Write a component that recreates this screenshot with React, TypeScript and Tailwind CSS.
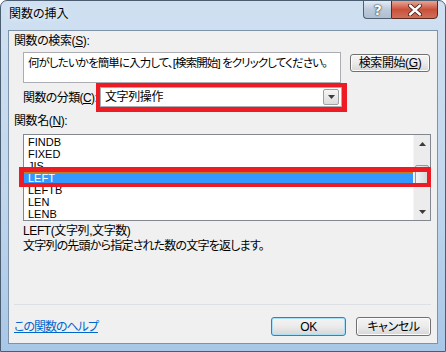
import React from 'react';

const names = ['FINDB', 'FIXED', 'JIS', 'LEFT', 'LEFTB', 'LEN', 'LENB'];

const Tri = ({ up }: { up?: boolean }) => (
  <svg width="7" height="4" viewBox="0 0 7 4">
    <path d={up ? 'M0 4 L3.5 0 L7 4 Z' : 'M0 0 L7 0 L3.5 4 Z'} fill="#3c3c3c" />
  </svg>
);

const WinButton = ({ label, def }: { label: string; def?: boolean }) => (
  <div
    className={`w-[75px] h-[19px] flex items-center justify-center rounded-[3px] border bg-gradient-to-b from-[#f4f4f4] via-[#ebebeb] to-[#d6d6d6] ${
      def ? 'border-[#3c7fb1] shadow-[inset_0_0_0_1px_#a9e0f8]' : 'border-[#707070] shadow-[inset_0_0_0_1px_#fcfcfc]'
    }`}
  >
    {label}
  </div>
);

export default function App() {
  return (
    <div className="w-[446px] h-[352px] flex flex-col rounded-t-[7px] border border-[#4b5d70] bg-gradient-to-b from-[#cfe0f1] via-[#c3d8ee] to-[#a8c7e7] font-['Liberation_Sans','Noto_Sans_CJK_JP',sans-serif] text-[12px] text-black overflow-hidden [font-feature-settings:'palt'] tracking-[-0.4px]">
      {/* title bar */}
      <div className="h-[29px] flex items-start pl-[8px]">
        <div className="mt-[5px] leading-[16px] tracking-normal [text-shadow:0_0_6px_#ffffff]">関数の挿入</div>
        <div className="ml-auto mr-[7px] flex h-[19px] -mt-px">
          <div className="w-[28px] h-[19px] flex items-center justify-center rounded-bl-[4px] border border-[#4f6072] border-r-0 bg-gradient-to-b from-[#e3ecf5] via-[#bccadb] to-[#aebfd2] text-white font-bold text-[14px] leading-none font-['DejaVu_Sans',sans-serif] [text-shadow:0_0_2px_#1d2a38,0_0_1px_#1d2a38]">
            ?
          </div>
          <div className="w-[47px] h-[19px] flex items-center justify-center rounded-br-[4px] border border-[#5a2a22] bg-gradient-to-b from-[#e8a595] via-[#c9503a] to-[#d0705a]">
            <svg width="16" height="12" viewBox="0 0 16 12">
              <path d="M3 1.5 L13 10.5 M13 1.5 L3 10.5" stroke="#3b1a14" strokeWidth="4" strokeLinecap="round" />
              <path d="M3 1.5 L13 10.5 M13 1.5 L3 10.5" stroke="#ffffff" strokeWidth="2.4" strokeLinecap="round" />
            </svg>
          </div>
        </div>
      </div>

      {/* client area */}
      <div className="mx-[7px] h-[314px] border border-[#7f93a8] bg-[#f0f0f0] flex flex-col">
        <div className="ml-[5px] mt-[3px] leading-[14px]">
          関数の検索(<span className="underline">S</span>):
        </div>

        <div className="mt-[4px] flex items-start">
          <div className="ml-[14px] w-[318px] h-[31px] border border-[#abadb3] bg-white pl-[4px] pt-[3px] leading-[14px] whitespace-nowrap overflow-hidden text-[11.5px] tracking-[-0.9px]">
            何がしたいかを簡単に入力して、[検索開始] をクリックしてください。
          </div>
          <div className="ml-[9px] mt-[2px] w-[80px] h-[18px] flex items-center justify-center rounded-[3px] border border-[#707070] bg-gradient-to-b from-[#f4f4f4] via-[#ebebeb] to-[#d6d6d6] shadow-[inset_0_0_0_1px_#fcfcfc]">
            検索開始(<span className="underline">G</span>)
          </div>
        </div>

        <div className="flex items-center">
          <div className="ml-[14px] w-[73px] whitespace-nowrap leading-[14px] tracking-[-0.6px]">
            関数の分類(<span className="underline">C</span>):
          </div>
          <div className="relative w-[251px] h-[29px] border-l-4 border-t-4 border-r-[5px] border-b-[5px] border-[#ed1c24]">
            <div className="w-full h-full border border-[#abadb3] bg-white flex items-center">
              <div className="pl-[4px] flex-1 leading-[14px]">文字列操作</div>
              <div className="mr-[2px] w-[16px] h-[16px] flex items-center justify-center rounded-[2px] border border-[#a0a0a0] bg-gradient-to-b from-[#f6f6f6] to-[#dcdcdc]">
                <Tri />
              </div>
            </div>
          </div>
        </div>

        <div className="ml-[5px] mt-[2px] leading-[14px]">
          関数名(<span className="underline">N</span>):
        </div>

        <div className="relative ml-[14px] mt-[6px] w-[408px] h-[87px] border border-[#828790] bg-white flex">
          <div className="flex-1 pt-px text-[11px] tracking-normal">
            {names.map((n) => (
              <div
                key={n}
                className={`h-[12px] leading-[12px] pl-[4px] ${
                  n === 'LEFT' ? 'bg-[#3399ff] text-white outline outline-1 outline-dotted outline-[#c47a1f] -outline-offset-1' : ''
                }`}
              >
                {n}
              </div>
            ))}
          </div>
          <div className="w-[17px] bg-[#ececec] border-l border-[#f4f4f4] flex flex-col">
            <div className="h-[17px] flex items-center justify-center">
              <Tri up />
            </div>
            <div className="flex-1">
              <div className="mt-[13px] mx-px h-[21px] rounded-[2px] border border-[#999999] bg-gradient-to-r from-[#f3f3f3] to-[#d8d8d8]" />
            </div>
            <div className="h-[17px] flex items-center justify-center">
              <Tri />
            </div>
          </div>
          <div className="absolute left-[-5px] top-[32px] w-[412px] h-[20px] border-l-[5px] border-t-[5px] border-r-4 border-b-4 border-[#ed1c24]" />
        </div>

        <div className="ml-[14px] mt-[3px] leading-[15px]">
          <div>LEFT(文字列,文字数)</div>
          <div className="tracking-[-0.8px]">文字列の先頭から指定された数の文字を返します。</div>
        </div>

        <div className="flex-1" />

        <div className="ml-[5px] w-[417px] h-px bg-[#dcdfe3]" />

        <div className="mt-[12px] mb-[7px] h-[19px] flex items-center">
          <div className="ml-[5px] text-[#0066cc] underline tracking-[-1px]">この関数のヘルプ</div>
          <div className="ml-auto mr-[6px] flex gap-[10px]">
            <WinButton label="OK" def />
            <WinButton label="キャンセル" />
          </div>
        </div>
      </div>
    </div>
  );
}
